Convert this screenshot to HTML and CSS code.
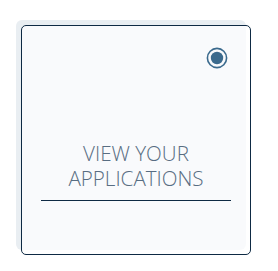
FILE: index.html
```html
<!DOCTYPE html>
<html>
<head>
<meta charset="utf-8">
<link rel="stylesheet" href="styles.css">
</head>
<body>
<div class="stage">
  <div class="shade"></div>
  <div class="card">
    <div class="top">
      <svg class="radio" width="22" height="22" viewBox="0 0 22 22" aria-hidden="true">
        <circle cx="11" cy="11" r="9.6" fill="none" stroke="#3b6a8d" stroke-width="1.6"/>
        <circle cx="11" cy="11" r="6.2" fill="#3b6a8d"/>
      </svg>
    </div>
    <div class="label">
      <span class="text">VIEW YOUR<br>APPLICATIONS</span>
    </div>
  </div>
</div>
</body>
</html>
```
FILE: styles.css
```css
html, body {
  margin: 0;
  padding: 0;
  background: #ffffff;
}
body {
  min-height: 271px;
  box-sizing: border-box;
  padding: 20px 0 16px 16px;
  font-family: "Open Sans", "Liberation Sans", sans-serif;
}
.stage {
  display: grid;
  width: 235px;
  height: 235px;
}
.shade {
  grid-area: 1 / 1;
  width: 230px;
  height: 230px;
  background: #e9eef2;
  border-radius: 6px;
}
.card {
  grid-area: 1 / 1;
  margin: 5px 0 0 5px;
  width: 230px;
  height: 230px;
  box-sizing: border-box;
  border: 1px solid #0e2a44;
  border-radius: 5px;
  background: rgba(255, 255, 255, 0.72);
  display: flex;
  flex-direction: column;
  padding: 0 19px;
}
.top {
  display: flex;
  justify-content: flex-end;
  padding-top: 21px;
  margin-right: 3px;
}
.radio {
  display: block;
}
.label {
  margin-top: 72px;
  border-bottom: 1px solid #0e2a44;
  text-align: center;
  padding-bottom: 9px;
}
.text {
  font-weight: 300;
  font-size: 20.6px;
  line-height: 24px;
  color: #586d82;
}
```
